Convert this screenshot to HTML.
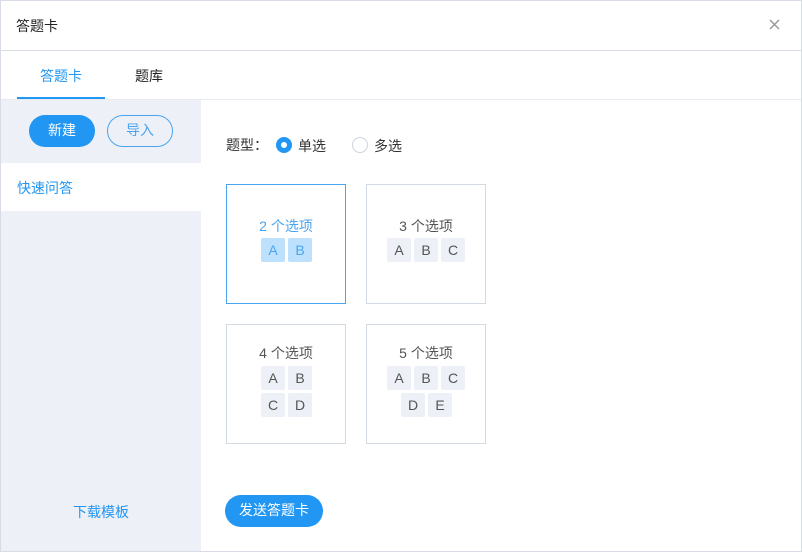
<!DOCTYPE html>
<html><head><meta charset="utf-8"><style>
*{box-sizing:border-box;margin:0;padding:0}
body{width:802px;height:552px;background:#fff;font-family:"Liberation Sans","Noto Sans CJK SC",sans-serif;font-size:14px;color:#333;position:relative;overflow:hidden}
.frame{position:absolute;left:0;top:0;width:802px;height:552px;border:1px solid #d8dce6}
.abs{position:absolute}
.hdr{left:1px;top:1px;width:800px;height:50px;border-bottom:1px solid #d8dce6}
.side{left:1px;top:100px;width:200px;height:451px;background:#edf0f7}
.chip{position:absolute;width:24px;height:24px;line-height:24px;text-align:center;background:#edf0f7;color:#555;border-radius:2px;font-size:14px}
.card{position:absolute;width:120px;height:120px;border:1px solid #d3dae2}
.lbl{position:absolute;left:0;width:118px;text-align:center;font-size:14px;color:#555}
</style></head><body>
<div class="abs hdr"></div>
<div class="abs" style="left:16px;top:16px;font-size:14px;color:#222">答题卡</div>
<svg class="abs" style="left:769px;top:19px" width="11" height="11"><path d="M1 1L10 10M10 1L1 10" stroke="#999" stroke-width="1.5"/></svg>
<div class="abs" style="left:1px;top:99px;width:800px;height:1px;background:#e6e9ef"></div>
<div class="abs" style="left:40px;top:66px;color:#2196f3">答题卡</div>
<div class="abs" style="left:135px;top:66px;color:#222">题库</div>
<div class="abs" style="left:17px;top:97px;width:88px;height:2px;background:#2196f3"></div>
<div class="abs side"></div>
<div class="abs" style="left:1px;top:163px;width:200px;height:48px;background:#fff"></div>
<div class="abs" style="left:29px;top:115px;width:66px;height:32px;border-radius:16px;background:#2196f3;color:#fff;text-align:center;line-height:31px">新建</div>
<div class="abs" style="left:107px;top:115px;width:66px;height:32px;border-radius:16px;border:1px solid #4aa5f0;color:#4aa5f0;text-align:center;line-height:29px">导入</div>
<div class="abs" style="left:17px;top:178px;color:#2196f3">快速问答</div>
<div class="abs" style="left:73px;top:502px;color:#2196f3">下载模板</div>
<div class="abs" style="left:226px;top:135px;color:#333">题型：</div>
<div class="abs" style="left:276px;top:137px;width:16px;height:16px;border-radius:50%;background:#2196f3"><div style="position:absolute;left:5px;top:5px;width:6px;height:6px;border-radius:50%;background:#fff"></div></div>
<div class="abs" style="left:298px;top:136px">单选</div>
<div class="abs" style="left:352px;top:137px;width:16px;height:16px;border-radius:50%;border:1px solid #ccd3dc"></div>
<div class="abs" style="left:374px;top:136px">多选</div>

<div class="card" style="left:226px;top:184px;border-color:#4aa5f0">
<div class="lbl" style="top:31px;color:#4aa5f0">2 个选项</div>
<div class="chip" style="left:34px;top:53px;background:#bde0fd;color:#4aa5f0">A</div>
<div class="chip" style="left:61px;top:53px;background:#bde0fd;color:#4aa5f0">B</div>
</div>
<div class="card" style="left:366px;top:184px">
<div class="lbl" style="top:31px">3 个选项</div>
<div class="chip" style="left:20px;top:53px">A</div>
<div class="chip" style="left:47px;top:53px">B</div>
<div class="chip" style="left:74px;top:53px">C</div>
</div>
<div class="card" style="left:226px;top:324px">
<div class="lbl" style="top:18px">4 个选项</div>
<div class="chip" style="left:34px;top:41px">A</div>
<div class="chip" style="left:61px;top:41px">B</div>
<div class="chip" style="left:34px;top:68px">C</div>
<div class="chip" style="left:61px;top:68px">D</div>
</div>
<div class="card" style="left:366px;top:324px">
<div class="lbl" style="top:18px">5 个选项</div>
<div class="chip" style="left:20px;top:41px">A</div>
<div class="chip" style="left:47px;top:41px">B</div>
<div class="chip" style="left:74px;top:41px">C</div>
<div class="chip" style="left:34px;top:68px">D</div>
<div class="chip" style="left:61px;top:68px">E</div>
</div>
<div class="abs" style="left:225px;top:495px;width:98px;height:32px;border-radius:16px;background:#2196f3;color:#fff;text-align:center;line-height:31px">发送答题卡</div>
<div class="frame"></div>
</body></html>
